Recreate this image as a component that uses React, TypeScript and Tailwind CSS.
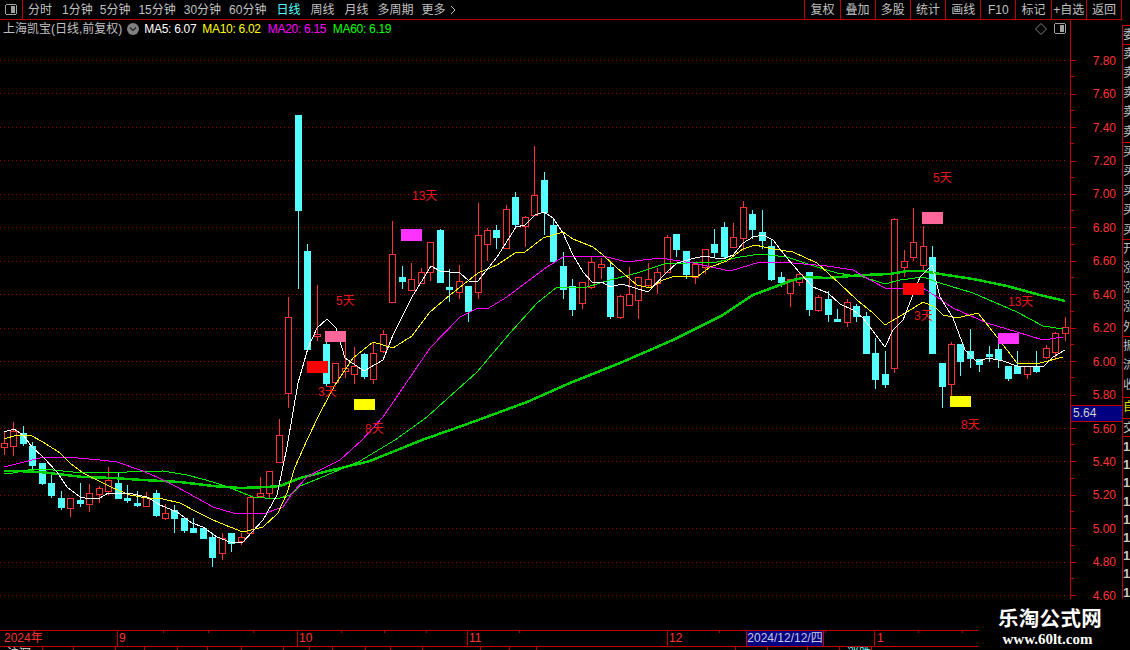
import React from "react";

const FONT = "font-['Liberation_Sans','Noto_Sans_CJK_SC',sans-serif]";

// [isRed, bodyTop, bodyBottom, high, low]
const C: [number, number, number, number, number][] = [
  [1,443,447,432,455],[1,431,446,422,456],[0,433,443,426,446],[0,446,465,442,469],[0,463,483,463,485],
  [0,483,495,475,498],[0,498,507,491,510],[1,498,508,498,517],[0,500,503,483,507],[1,493,504,484,512],
  [1,488,494,486,503],[1,480,491,467,495],[0,483,498,473,498],[0,498,500,485,503],[0,503,505,491,507],
  [1,497,506,492,506],[0,493,515,490,517],[1,513,518,504,520],[0,510,518,505,533],[0,518,530,518,533],
  [0,528,532,518,532],[0,528,538,528,538],[0,537,557,533,567],[1,538,553,533,560],[0,533,543,533,552],
  [1,537,541,533,545],[1,497,533,497,534],[1,493,496,477,496],[1,471,493,471,498],[1,435,462,419,463],
  [1,317,393,297,408],[0,115,210,115,289],[0,251,349,244,349],[1,334,336,285,341],[0,344,383,340,387],
  [1,363,382,363,384],[1,368,371,333,378],[1,366,374,347,384],[0,354,376,353,379],[1,353,379,343,384],
  [1,334,351,330,353],[1,254,302,221,302],[0,277,281,266,289],[1,279,290,263,290],[1,272,283,268,283],
  [1,242,272,242,281],[0,230,282,229,282],[0,287,289,269,302],[1,281,292,265,299],[0,286,311,286,322],
  [1,235,292,203,299],[1,230,244,228,261],[0,230,237,225,249],[1,209,248,205,248],[0,197,224,192,227],
  [1,217,226,216,247],[1,195,215,146,215],[0,180,212,172,235],[0,225,261,219,264],[0,266,289,252,299],
  [0,286,309,279,316],[1,282,303,282,309],[1,262,287,257,289],[1,264,267,258,279],[0,267,316,262,319],
  [1,296,317,295,319],[1,294,305,267,305],[1,277,300,277,319],[1,279,285,263,287],[1,272,283,268,294],
  [1,237,272,235,272],[0,234,249,234,257],[0,251,274,251,279],[1,264,277,264,284],[1,249,267,249,274],
  [0,244,252,229,258],[0,227,256,222,258],[1,237,247,223,247],[1,207,238,201,251],[0,214,229,210,239],
  [0,232,240,210,249],[0,246,279,240,281],[0,277,282,272,287],[1,279,293,279,307],[1,274,282,272,286],
  [0,272,309,272,316],[1,297,310,295,312],[0,299,314,291,322],[0,319,321,309,322],[1,302,322,299,327],
  [0,306,316,304,322],[0,316,353,312,353],[0,353,379,338,389],[0,374,384,351,388],[1,219,368,218,373],
  [1,261,267,250,277],[1,242,257,208,261],[1,246,265,226,270],[0,257,353,246,353],[0,363,386,363,408],
  [1,344,384,342,396],[0,344,361,344,376],[0,351,358,329,368],[0,359,364,359,372],[0,354,356,346,362],
  [0,349,359,343,368],[0,366,378,366,381],[0,366,373,351,373],[1,366,374,366,379],[0,366,371,351,373],
  [1,348,357,345,359],[1,333,352,332,360],[1,327,333,317,341],
];

const MA5 = "4,432 14,429 23,435 32,447 43,457 57,472 67,487 80,497 90,499 100,498 108,493 128,493 147,497 160,505 177,512 192,523 203,527 217,537 230,542 242,543 263,520 277,495 287,447 298,383 308,348 317,328 327,319 336,328 345,358 364,371 383,360 393,335 412,297 431,266 440,271 460,273 469,281 478,281 497,257 516,227 525,225 535,215 544,212 553,218 563,233 573,255 583,272 592,282 602,282 610,287 622,284 648,292 667,272 677,263 695,258 705,256 715,258 723,259 733,255 743,243 753,237 763,235 773,240 787,258 800,273 813,287 828,293 840,304 853,310 863,318 885,347 893,330 903,320 920,277 932,265 940,297 953,318 965,350 977,362 988,358 1003,361 1017,366 1043,367 1053,357 1065,350";
const MA10 = "4,439 17,435 30,435 43,442 60,453 70,463 83,473 97,480 113,488 130,495 147,498 163,499 180,503 197,512 213,520 230,527 243,532 263,527 278,513 287,493 295,467 307,440 320,413 335,385 353,358 373,342 393,348 412,336 430,312 450,295 478,273 497,265 515,253 525,252 543,238 563,232 573,239 593,247 603,255 617,268 637,285 650,288 663,280 675,276 697,277 710,267 727,261 743,249 755,245 773,249 793,252 817,263 840,284 857,300 873,313 885,325 907,312 923,302 935,307 943,315 957,318 978,313 997,337 1017,363 1040,363 1063,357";
const MA20 = "4,467 20,463 40,458 67,457 100,460 117,462 140,470 157,477 177,487 197,498 213,507 233,513 263,514 283,507 293,492 307,477 320,470 340,460 362,440 383,417 413,373 430,348 460,317 478,308 487,309 507,297 527,282 547,267 563,257 573,256 593,257 603,256 627,262 660,258 693,263 730,271 760,262 793,263 827,266 853,270 870,280 885,288 900,288 923,288 937,297 953,308 987,323 1017,332 1043,340 1063,337";
const MA30 = "4,474 13,473 33,469 53,470 73,472 127,472 163,471 187,475 213,482 233,489 253,497 277,499 290,495 300,486 320,478 360,461 395,440 427,417 477,372 510,333 537,303 557,287 587,287 610,280 637,273 667,263 687,263 717,262 740,257 760,254 787,257 817,267 837,273 863,277 885,284 900,280 923,277 940,283 973,293 1017,312 1043,326 1063,329";
const MA60 = "4,471 17,471 40,472 83,477 113,478 143,480 180,482 213,486 240,488 267,487 280,486 300,478 320,473 370,461 422,440 470,423 527,402 570,383 620,363 673,340 723,315 753,295 793,280 807,277 827,278 863,275 890,274 907,271 923,271 940,274 973,279 1007,286 1040,295 1065,301";

const GRID = [60,93,127,160,194,227,261,294,328,361,394,428,461,495,528,562,595];
const PRICES = ["7.80","7.60","7.40","7.20","7.00","6.80","6.60","6.40","6.20","6.00","5.80","5.60","5.40","5.20","5.00","4.80","4.60"];

const BLOCKS: [number, number, number, number, string][] = [
  [307,361,21,12,"#ff0000"],[325,331,21,11,"#ff6699"],[354,399,21,11,"#ffff00"],[401,229,21,12,"#ff33ff"],
  [922,212,21,12,"#ff6699"],[903,283,21,12,"#ff0000"],[950,396,21,11,"#ffff00"],[998,333,21,11,"#ff33ff"],
];
const TAGS: [number, number, string][] = [
  [412,200,"13天"],[336,305,"5天"],[318,396,"3天"],[365,433,"8天"],
  [933,182,"5天"],[914,320,"3天"],[1008,306,"13天"],[961,429,"8天"],
];

const LEFT: [string, string][] = [
  ["分时","ml-[5px]"],["1分钟","ml-[10px]"],["5分钟","ml-[7px]"],["15分钟","ml-2"],["30分钟","ml-2"],["60分钟","ml-2"],
  ["日线","ml-[10px] text-[#54ffff]"],["周线","ml-[10px]"],["月线","ml-[10px]"],["多周期","ml-[9px]"],["更多","ml-2"],
];
const RIGHT = ["复权","叠加","多股","统计","画线","F10","标记","+自选","返回"];

const PanelIcon = () => (
  <svg width="13" height="12" viewBox="0 0 13 12" shapeRendering="crispEdges">
    <rect x="0.5" y="0.5" width="11" height="10" rx="2" fill="none" stroke="#a0a0a0" />
    <rect x="6" y="2" width="4" height="7" fill="#a0a0a0" />
  </svg>
);

const Chart = () => (
  <svg width="1070" height="592" viewBox="0 38 1070 592" className="block">
    {GRID.map((y) => (
      <line key={y} x1="0" x2="1068" y1={y + 0.5} y2={y + 0.5} stroke="#a00000" strokeDasharray="1 3" />
    ))}
    <g shapeRendering="crispEdges">
      {C.map(([red, t, b, h, l], i) => {
        const x = Math.round(4 + 9.47 * i);
        const col = red ? "#ff3232" : "#54ffff";
        return (
          <g key={i}>
            <line x1={x + 0.5} x2={x + 0.5} y1={h} y2={l} stroke={col} />
            {red ? (
              <rect x={x - 2.5} y={t + 0.5} width="6" height={b - t} fill="#000" stroke={col} />
            ) : (
              <rect x={x - 3} y={t} width="7" height={b - t + 1} fill={col} />
            )}
          </g>
        );
      })}
      <polyline points={MA60} fill="none" stroke="#00d000" strokeWidth="2.5" />
      <polyline points={MA30} fill="none" stroke="#00f000" />
      <polyline points={MA20} fill="none" stroke="#ff00ff" />
      <polyline points={MA10} fill="none" stroke="#ffff00" />
      <polyline points={MA5} fill="none" stroke="#ffffff" />
      {BLOCKS.map(([x, y, w, h, c]) => (
        <rect key={x} x={x} y={y} width={w} height={h} fill={c} />
      ))}
    </g>
    {TAGS.map(([x, y, t]) => (
      <text key={x} x={x} y={y} fontSize="12" fill="#e81818">{t}</text>
    ))}
  </svg>
);

const PriceAxis = () => (
  <div className="relative w-[52px] h-[579px] border-l border-[#c00000] pt-[24px] flex flex-col">
    {PRICES.map((p) => (
      <div key={p} className="relative h-[33.44px] shrink-0 flex items-center">
        <div className="w-[5px] h-px bg-[#c00000]" />
        <span className="ml-auto mr-[6px] text-[12px] leading-none text-[#ff3232]">{p}</span>
        <div className="absolute left-0 bottom-0 w-[3px] h-px bg-[#c00000]" />
      </div>
    ))}
    <div className="absolute left-0 top-[385px] w-[51px] h-[17px] bg-[#000080] border-y border-[#c00000] pl-[2px] text-[12px] leading-[15px] text-[#d0d0d0]">5.64</div>
  </div>
);

const Cell = ({ t, c = "text-[#c0c0c0]" }: { t: string; c?: string }) => (
  <div className={`h-[19.4px] shrink-0 leading-[19px] whitespace-nowrap text-[12px] ${c}`}>{t}</div>
);

const SideCol = () => (
  <div className="mt-[5px] w-[8px] h-[574px] border-l border-[#c00000] flex flex-col overflow-hidden">
    <div className="h-[20px] shrink-0 border-y border-[#c00000]"><Cell t="委" /></div>
    <div className="h-[97px] shrink-0">{["卖","卖","卖","卖","卖"].map((t, i) => <Cell key={i} t={t} />)}</div>
    <div className="h-[97px] shrink-0 border-t border-[#c00000]">{["买","买","买","买","买"].map((t, i) => <Cell key={i} t={t} />)}</div>
    <div className="h-[97px] shrink-0 border-t border-[#c00000]">{["开","涨","涨","涨","外"].map((t, i) => <Cell key={i} t={t} />)}</div>
    <div className="h-[61px] shrink-0 border-t border-[#c00000]">{["振","流","收"].map((t, i) => <Cell key={i} t={t} />)}</div>
    <div className="h-[21px] shrink-0 border-t border-[#c00000]"><Cell t="自" c="text-[#e0e000]" /></div>
    <div className="h-[19px] shrink-0 border-y border-[#c00000]"><Cell t="交" /></div>
    <div className="pt-[1px]">
      {[0,1,2,3,4,5,6,7,8].map((i) => (
        <div key={i} className="h-[18.2px] leading-[18px] text-[13px] font-bold text-[#c8c8c8]">1</div>
      ))}
    </div>
  </div>
);

const MONTHS: [string, string, number[]][] = [
  ["2024年","w-[117px] pl-1",[]],
  ["9","w-[180px] pl-[1px]",[45,90,135]],
  ["10","w-[170px] pl-[1px]",[43,86,128]],
  ["11","w-[200px] pl-[1px]",[51]],
  ["12","w-[207px] pl-[1px]",[51,157]],
  ["1","w-[104px] pl-[2px]",[43,87]],
];

const TimeAxis = () => (
  <div className="relative w-[978px] h-[17px] border-y border-[#c00000] flex">
    {MONTHS.map(([t, w, ticks], i) => (
      <div key={t} className={`relative h-full text-[12px] leading-[15px] text-[#ff3232] ${w} ${i ? "border-l border-[#c00000]" : ""}`}>
        {t}
        {ticks.map((x) => (
          <div key={x} className="absolute top-0 w-px h-[2px] bg-[#c00000]" style={{ left: x }} />
        ))}
      </div>
    ))}
    <div className="absolute left-[746px] top-0 w-[78px] h-[15px] bg-[#000080] border-x border-[#c00000] text-center text-[12px] leading-[15px] text-[#c8c8e0]">2024/12/12/四</div>
  </div>
);

const STRIP = [42,73,115,144,177,207,241,283,309,332,365,390,422,480,509,536,735,767,807,839,871];

export default function App() {
  return (
    <div className={`relative w-[1130px] h-[650px] bg-black overflow-hidden ${FONT}`}>
      <div className="w-[1122px] h-[20px] border-b border-r border-[#c00000] flex items-center text-[12px] text-[#c0c0c0]">
        <div className="w-[23px] h-full border-r border-[#c00000] flex items-center justify-center"><PanelIcon /></div>
        {LEFT.map(([t, c]) => <span key={t} className={`whitespace-nowrap ${c}`}>{t}</span>)}
        <svg width="6" height="10" viewBox="0 0 6 10" className="ml-[4px]"><path d="M1 1l4 4-4 4" fill="none" stroke="#c0c0c0" /></svg>
        <div className="ml-auto flex h-full">
          {RIGHT.map((t) => (
            <div key={t} className="w-[35.2px] h-full border-l border-[#c00000] flex items-center justify-center whitespace-nowrap">{t}</div>
          ))}
        </div>
      </div>
      <div className="flex h-[610px]">
        <div className="w-[1070px] flex flex-col">
          <div className="h-[18px] flex items-center pl-[3px] text-[12px] whitespace-nowrap pr-[3px]">
            <span className="text-[#c0c0c0]">上海凯宝(日线,前复权)</span>
            <svg width="12" height="12" viewBox="0 0 12 12" className="ml-[5px]">
              <circle cx="6" cy="6" r="6" fill="#808080" />
              <path d="M3 4.5l3 3 3-3" fill="none" stroke="#202020" strokeWidth="1.2" />
            </svg>
            <span className="ml-[5px] w-[58px] tracking-[-0.3px] text-white">MA5: 6.07</span>
            <span className="w-[65.5px] tracking-[-0.3px] text-[#ffff00]">MA10: 6.02</span>
            <span className="w-[65px] tracking-[-0.3px] text-[#ff00ff]">MA20: 6.15</span>
            <span className="tracking-[-0.3px] text-[#00ff00]">MA60: 6.19</span>
            <svg width="12" height="12" viewBox="0 0 12 12" className="ml-auto mr-[7px]">
              <path d="M6 .5L11.5 6 6 11.5.5 6z" fill="none" stroke="#808080" />
            </svg>
            <PanelIcon />
          </div>
          <Chart />
        </div>
        <PriceAxis />
        <SideCol />
      </div>
      <TimeAxis />
      <svg width="978" height="3" viewBox="0 647 978 3" className="block">
        {STRIP.map((x) => <line key={x} x1={x + 0.5} x2={x + 0.5} y1="647" y2="650" stroke="#c00000" />)}
        <text x="7" y="658" fontSize="12" fill="#e0e0e0">沪深</text>
        <text x="847" y="658" fontSize="12" fill="#54ffff">涨跌</text>
      </svg>
      <div className="absolute left-[997px] top-[606px] w-[106px] text-white text-center font-bold">
        <div className="text-[20.5px] leading-[26px] tracking-[0.3px]">乐淘公式网</div>
        <div className="mt-[-1px] text-[15px] leading-[17px] font-['Liberation_Serif',serif] -ml-[5px]">www.60lt.com</div>
      </div>
    </div>
  );
}
